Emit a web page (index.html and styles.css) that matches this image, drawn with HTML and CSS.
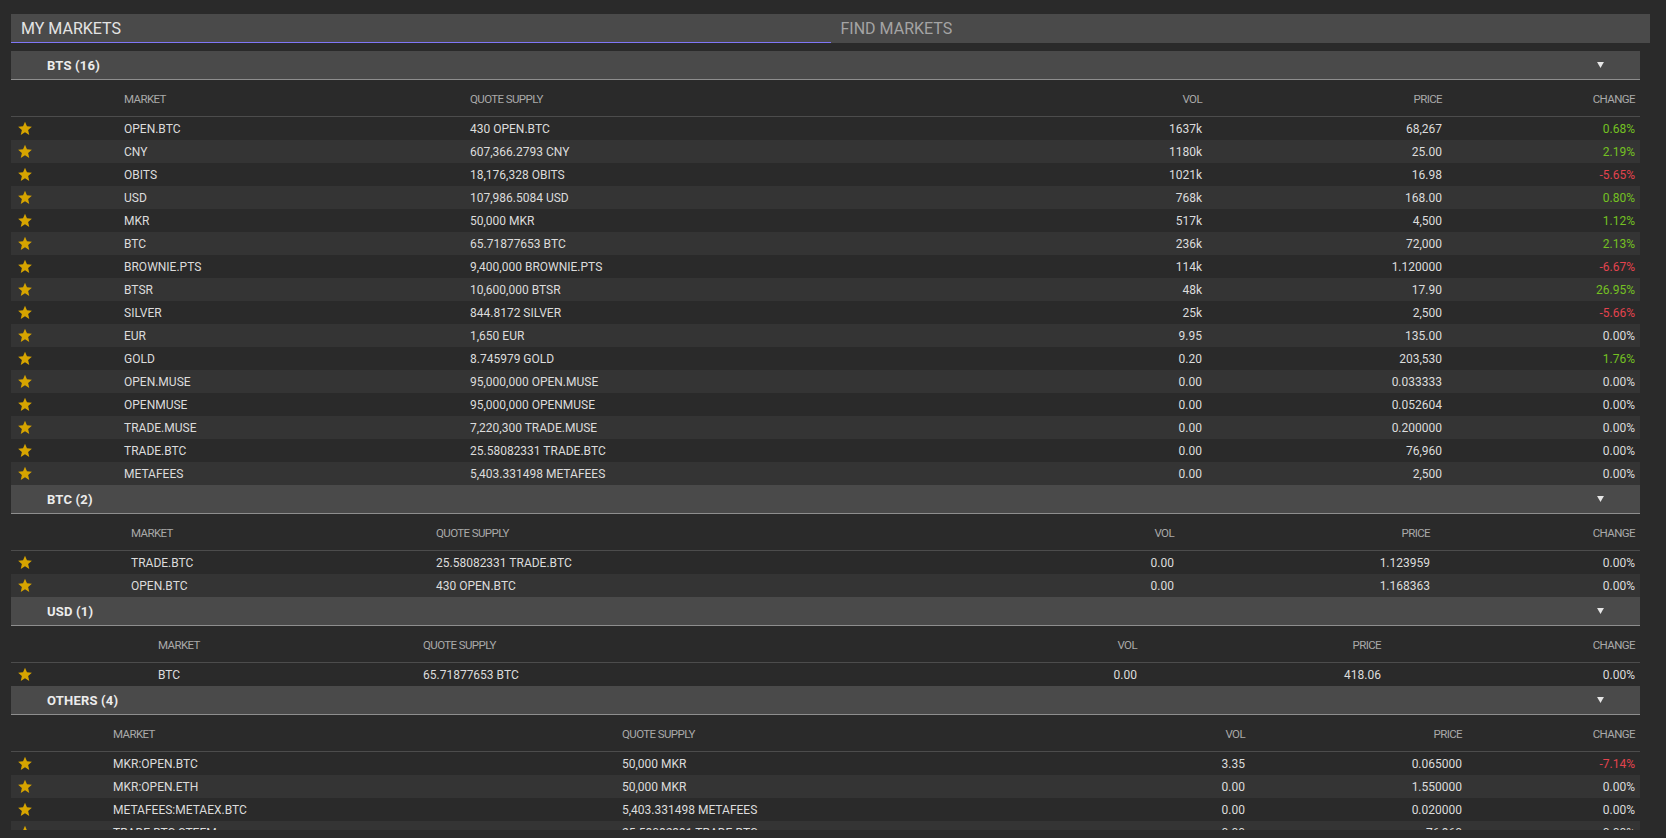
FILE: index.html
```html
<!DOCTYPE html>
<html>
<head>
<meta charset="utf-8">
<link rel="stylesheet" href="styles.css">
</head>
<body>
<svg width="0" height="0" class="defs">
  <defs>
    <symbol id="star" viewBox="0 0 24 24"><path d="M12 1.2l3.1 7.3 7.9.7-6 5.2 1.8 7.8L12 18.1l-6.8 4.1L7 14.4 1 9.2l7.9-.7z"/></symbol>
    <symbol id="caret" viewBox="0 0 8 7"><path d="M0 0h8L4 7z"/></symbol>
  </defs>
</svg>
<div class="page">
  <div class="tabs">
    <div class="tab active">MY MARKETS</div>
    <div class="tab">FIND MARKETS</div>
  </div>
  <div class="scroll">

    <section class="group g-bts">
      <div class="group-head"><span class="gname">BTS (16)</span><svg class="caret"><use href="#caret"/></svg></div>
      <div class="row colhead"><span></span><span>MARKET</span><span>QUOTE SUPPLY</span><span class="r">VOL</span><span class="r">PRICE</span><span class="r">CHANGE</span></div>
      <div class="row"><span class="st"><svg><use href="#star"/></svg></span><span>OPEN.BTC</span><span>430 OPEN.BTC</span><span class="r">1637k</span><span class="r">68,267</span><span class="r up">0.68%</span></div>
      <div class="row"><span class="st"><svg><use href="#star"/></svg></span><span>CNY</span><span>607,366.2793 CNY</span><span class="r">1180k</span><span class="r">25.00</span><span class="r up">2.19%</span></div>
      <div class="row"><span class="st"><svg><use href="#star"/></svg></span><span>OBITS</span><span>18,176,328 OBITS</span><span class="r">1021k</span><span class="r">16.98</span><span class="r down">-5.65%</span></div>
      <div class="row"><span class="st"><svg><use href="#star"/></svg></span><span>USD</span><span>107,986.5084 USD</span><span class="r">768k</span><span class="r">168.00</span><span class="r up">0.80%</span></div>
      <div class="row"><span class="st"><svg><use href="#star"/></svg></span><span>MKR</span><span>50,000 MKR</span><span class="r">517k</span><span class="r">4,500</span><span class="r up">1.12%</span></div>
      <div class="row"><span class="st"><svg><use href="#star"/></svg></span><span>BTC</span><span>65.71877653 BTC</span><span class="r">236k</span><span class="r">72,000</span><span class="r up">2.13%</span></div>
      <div class="row"><span class="st"><svg><use href="#star"/></svg></span><span>BROWNIE.PTS</span><span>9,400,000 BROWNIE.PTS</span><span class="r">114k</span><span class="r">1.120000</span><span class="r down">-6.67%</span></div>
      <div class="row"><span class="st"><svg><use href="#star"/></svg></span><span>BTSR</span><span>10,600,000 BTSR</span><span class="r">48k</span><span class="r">17.90</span><span class="r up">26.95%</span></div>
      <div class="row"><span class="st"><svg><use href="#star"/></svg></span><span>SILVER</span><span>844.8172 SILVER</span><span class="r">25k</span><span class="r">2,500</span><span class="r down">-5.66%</span></div>
      <div class="row"><span class="st"><svg><use href="#star"/></svg></span><span>EUR</span><span>1,650 EUR</span><span class="r">9.95</span><span class="r">135.00</span><span class="r">0.00%</span></div>
      <div class="row"><span class="st"><svg><use href="#star"/></svg></span><span>GOLD</span><span>8.745979 GOLD</span><span class="r">0.20</span><span class="r">203,530</span><span class="r up">1.76%</span></div>
      <div class="row"><span class="st"><svg><use href="#star"/></svg></span><span>OPEN.MUSE</span><span>95,000,000 OPEN.MUSE</span><span class="r">0.00</span><span class="r">0.033333</span><span class="r">0.00%</span></div>
      <div class="row"><span class="st"><svg><use href="#star"/></svg></span><span>OPENMUSE</span><span>95,000,000 OPENMUSE</span><span class="r">0.00</span><span class="r">0.052604</span><span class="r">0.00%</span></div>
      <div class="row"><span class="st"><svg><use href="#star"/></svg></span><span>TRADE.MUSE</span><span>7,220,300 TRADE.MUSE</span><span class="r">0.00</span><span class="r">0.200000</span><span class="r">0.00%</span></div>
      <div class="row"><span class="st"><svg><use href="#star"/></svg></span><span>TRADE.BTC</span><span>25.58082331 TRADE.BTC</span><span class="r">0.00</span><span class="r">76,960</span><span class="r">0.00%</span></div>
      <div class="row"><span class="st"><svg><use href="#star"/></svg></span><span>METAFEES</span><span>5,403.331498 METAFEES</span><span class="r">0.00</span><span class="r">2,500</span><span class="r">0.00%</span></div>
    </section>

    <section class="group g-btc">
      <div class="group-head"><span class="gname">BTC (2)</span><svg class="caret"><use href="#caret"/></svg></div>
      <div class="row colhead"><span></span><span>MARKET</span><span>QUOTE SUPPLY</span><span class="r">VOL</span><span class="r">PRICE</span><span class="r">CHANGE</span></div>
      <div class="row"><span class="st"><svg><use href="#star"/></svg></span><span>TRADE.BTC</span><span>25.58082331 TRADE.BTC</span><span class="r">0.00</span><span class="r">1.123959</span><span class="r">0.00%</span></div>
      <div class="row"><span class="st"><svg><use href="#star"/></svg></span><span>OPEN.BTC</span><span>430 OPEN.BTC</span><span class="r">0.00</span><span class="r">1.168363</span><span class="r">0.00%</span></div>
    </section>

    <section class="group g-usd">
      <div class="group-head"><span class="gname">USD (1)</span><svg class="caret"><use href="#caret"/></svg></div>
      <div class="row colhead"><span></span><span>MARKET</span><span>QUOTE SUPPLY</span><span class="r">VOL</span><span class="r">PRICE</span><span class="r">CHANGE</span></div>
      <div class="row"><span class="st"><svg><use href="#star"/></svg></span><span>BTC</span><span>65.71877653 BTC</span><span class="r">0.00</span><span class="r">418.06</span><span class="r">0.00%</span></div>
    </section>

    <section class="group g-oth">
      <div class="group-head"><span class="gname">OTHERS (4)</span><svg class="caret"><use href="#caret"/></svg></div>
      <div class="row colhead"><span></span><span>MARKET</span><span>QUOTE SUPPLY</span><span class="r">VOL</span><span class="r">PRICE</span><span class="r">CHANGE</span></div>
      <div class="row"><span class="st"><svg><use href="#star"/></svg></span><span>MKR:OPEN.BTC</span><span>50,000 MKR</span><span class="r">3.35</span><span class="r">0.065000</span><span class="r down">-7.14%</span></div>
      <div class="row"><span class="st"><svg><use href="#star"/></svg></span><span>MKR:OPEN.ETH</span><span>50,000 MKR</span><span class="r">0.00</span><span class="r">1.550000</span><span class="r">0.00%</span></div>
      <div class="row"><span class="st"><svg><use href="#star"/></svg></span><span>METAFEES:METAEX.BTC</span><span>5,403.331498 METAFEES</span><span class="r">0.00</span><span class="r">0.020000</span><span class="r">0.00%</span></div>
      <div class="row"><span class="st"><svg><use href="#star"/></svg></span><span>TRADE.BTC:STEEM</span><span>25.58082331 TRADE.BTC</span><span class="r">0.00</span><span class="r">76,960</span><span class="r">0.00%</span></div>
    </section>

  </div>
</div>
</body>
</html>
```

FILE: styles.css
```css
html, body {
  margin: 0;
  padding: 0;
  background: #2a2a2a;
  height: 100%;
  overflow: hidden;
}
body {
  font-family: Roboto, "Liberation Sans", sans-serif;
  color: #dcdcdc;
}
.defs {
  position: absolute;
  width: 0;
  height: 0;
}
.page {
  padding: 14px 16px 0 11px;
}
.tabs {
  display: flex;
  height: 29px;
  background: #4a4a4a;
}
.tab {
  flex: 1 1 0;
  display: flex;
  align-items: center;
  padding-left: 10px;
  font-size: 16px;
  color: #a4a4a4;
}
.tab.active {
  color: #e4e4e4;
  box-shadow: inset 0 -1px 0 #7f76f6;
}
.scroll {
  margin-top: 8px;
  margin-right: 10px;
  height: 779px;
  overflow: hidden;
}
.group-head {
  height: 28px;
  background: #4a4a4a;
  border-bottom: 1px solid #8e8e8e;
  display: flex;
  align-items: center;
  justify-content: space-between;
  padding: 0 36px 0 36px;
}
.gname {
  font-weight: bold;
  font-size: 13px;
  letter-spacing: 0.2px;
  color: #ececec;
}
.caret {
  width: 7px;
  height: 6px;
  fill: #e6e6e6;
}
.row {
  display: grid;
  height: 23px;
  align-items: center;
  font-size: 12px;
  white-space: nowrap;
}
.row > span {
  padding: 0 5px;
  overflow: hidden;
}
.row:nth-child(even) {
  background: #343434;
}
.row.colhead {
  box-sizing: border-box;
  height: 37px;
  padding-top: 2px;
  border-bottom: 1px solid #4c4c4c;
  background: transparent;
  color: #a9a9a9;
  font-size: 11.5px;
  letter-spacing: -0.6px;
}
.r {
  text-align: right;
}
.up {
  color: #74c122;
}
.down {
  color: #e3434e;
}
.row > .st {
  padding-left: 6px;
  display: flex;
  align-items: center;
}
.st svg {
  width: 16px;
  height: 15px;
  fill: #d6a400;
}
.g-bts .row {
  grid-template-columns: 108px 346px 535px 207px 240px 193px;
}
.g-btc .row {
  grid-template-columns: 115px 305px 519px 229px 256px 205px;
}
.g-usd .row {
  grid-template-columns: 142px 265px 502px 222px 244px 254px;
}
.g-oth .row {
  grid-template-columns: 97px 509px 433px 200px 217px 173px;
}
```
